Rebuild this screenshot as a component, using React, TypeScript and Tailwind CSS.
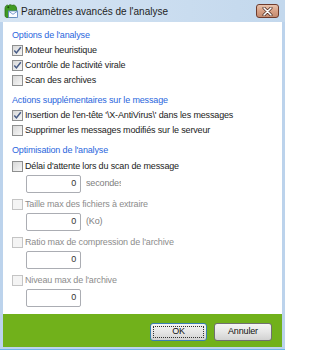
import React from 'react';

const font = "font-['Liberation_Sans',Arial,sans-serif]";

function Box({ checked = false, disabled = false }: { checked?: boolean; disabled?: boolean }) {
  return (
    <span
      className={`relative flex h-[11px] w-[11px] shrink-0 items-center justify-center border ${
        disabled
          ? 'border-[#c4c4c4] bg-[#f4f4f4]'
          : 'border-[#8e8f8f] bg-gradient-to-br from-[#d8d8d8] to-[#f7f7f7]'
      }`}
    >
      {checked && (
        <svg width="9" height="9" viewBox="0 0 9 9" className="absolute">
          <path d="M1.3 4.6 L3.4 6.9 L7.8 1.2" fill="none" stroke="#485c86" strokeWidth="1.5" />
        </svg>
      )}
    </span>
  );
}

function Check({
  label,
  checked,
  disabled,
  muted,
}: {
  label: string;
  checked?: boolean;
  disabled?: boolean;
  muted?: boolean;
}) {
  return (
    <div className="flex h-[15px] items-center gap-[2px]">
      <Box checked={checked} disabled={disabled} />
      <span className={`whitespace-nowrap ${muted ? 'text-[#8c8c8c]' : 'text-[#1b1b1b]'}`}>{label}</span>
    </div>
  );
}

function Header({ children, className = '' }: { children: React.ReactNode; className?: string }) {
  return <div className={`flex h-[15px] items-center text-[#2a66dd] ${className}`}>{children}</div>;
}

function NumField({ unit, clip }: { unit?: string; clip?: boolean }) {
  return (
    <div className="mt-[1px] flex h-[18px] items-center pl-[14px]">
      <div className="flex h-[18px] w-[55px] items-center justify-end rounded-[2px] border border-[#abadb3] bg-white pr-[4px] text-[#333]">
        0
      </div>
      {unit && (
        <span
          className={`ml-[5px] whitespace-nowrap text-[#7e7e7e] ${clip ? 'w-[35px] overflow-hidden' : ''}`}
        >
          {unit}
        </span>
      )}
    </div>
  );
}

function Btn({ label, primary }: { label: string; primary?: boolean }) {
  return (
    <button
      className={`relative flex h-[18px] items-center justify-center rounded-[3px] border bg-gradient-to-b from-[#f4f4f4] via-[#e6e6e6] to-[#d2d2d2] text-[#111] ${
        primary ? 'w-[57px] border-[#3c7fb1]' : 'w-[58px] border-[#707070]'
      }`}
    >
      {primary && (
        <span className="absolute inset-[2px] rounded-[1px] border border-dotted border-[#333]" />
      )}
      <span className="relative">{label}</span>
    </button>
  );
}

export default function App() {
  return (
    <div className={`flex h-[350px] w-[285px] flex-col bg-[#bcd3ec] text-[9px] tracking-[-0.15px] ${font}`}>
      {/* title bar */}
      <div className="flex h-[22px] items-center bg-gradient-to-r from-[#d5e4f3] to-[#c3d8ed] pl-[4px] pr-[6px]">
        <svg width="14" height="14" viewBox="0 0 14 14" className="shrink-0">
          <path
            d="M1 5 C1 1.5 3 0.5 4.5 1.5 C5.5 0.5 7 0.5 8 1.5 C9.5 0.5 12 1.2 12.5 4 L13 11 C13 13 12 13.5 10 13.5 L3 13.5 C1.5 13.5 1 12.5 1 11 Z"
            fill="#3f9a23"
            stroke="#2b6e14"
            strokeWidth="0.8"
          />
          <circle cx="4.3" cy="3.2" r="1" fill="#1f4a0c" />
          <rect x="4.5" y="7" width="9" height="6.5" fill="#fafcff" stroke="#5b84c4" strokeWidth="0.8" />
          <path d="M4.8 7.3 L9 10.3 L13.2 7.3" fill="none" stroke="#5b84c4" strokeWidth="0.8" />
        </svg>
        <span className="ml-[3px] text-[10px] tracking-normal text-[#1e1e1e]">Paramètres avancés de l'analyse</span>
        <div className="ml-auto flex h-[14px] w-[23px] items-center justify-center rounded-[3px] border border-[#6e3b2c] bg-gradient-to-b from-[#e7c3ae] via-[#d7a085] to-[#c48b70]">
          <svg width="11" height="9" viewBox="0 0 11 9">
            <path d="M2 1 L9 8 M9 1 L2 8" stroke="#4a2a20" strokeWidth="3" strokeLinecap="round" />
            <path d="M2 1 L9 8 M9 1 L2 8" stroke="#ffffff" strokeWidth="1.6" strokeLinecap="round" />
          </svg>
        </div>
      </div>

      <div className="mx-[3px] flex flex-1 flex-col bg-white pl-[9px] pt-[6px]">
        <Header>Options de l'analyse</Header>
        <Check label="Moteur heuristique" checked />
        <Check label="Contrôle de l'activité virale" checked />
        <Check label="Scan des archives" />

        <Header className="mt-[5px]">Actions supplémentaires sur le message</Header>
        <Check label="Insertion de l'en-tête '\X-AntiVirus\' dans les messages" checked />
        <Check label="Supprimer les messages modifiés sur le serveur" />

        <Header className="mt-[5px]">Optimisation de l'analyse</Header>
        <div className="mt-[1px]">
          <Check label="Délai d'attente lors du scan de message" />
        </div>
        <NumField unit="secondes" clip />

        <div className="mt-[4px]">
          <Check label="Taille max des fichiers à extraire" disabled muted />
        </div>
        <NumField unit="(Ko)" />

        <div className="mt-[4px]">
          <Check label="Ratio max de compression de l'archive" disabled muted />
        </div>
        <NumField />

        <div className="mt-[4px]">
          <Check label="Niveau max de l'archive" disabled muted />
        </div>
        <NumField />
      </div>

      <div className="mx-[3px] flex h-[33px] items-start justify-end gap-[7px] bg-[#71b11b] pr-[10px] pt-[9px]">
        <Btn label="OK" primary />
        <Btn label="Annuler" />
      </div>
      <div className="h-[3px] border-b border-[#6fb6e6]" />
    </div>
  );
}
